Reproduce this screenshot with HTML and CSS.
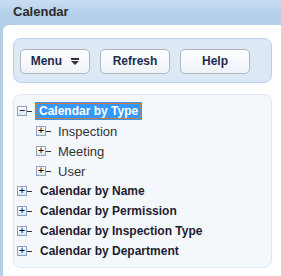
FILE: index.html
```html
<!DOCTYPE html>
<html lang="en">
<head>
  <meta charset="UTF-8">
  <title>Calendar</title>
  <link rel="stylesheet" href="styles.css">
</head>
<body>
  <div class="portlet">
    <div class="portlet-title">Calendar</div>
    <div class="portlet-body">
      <div class="toolbar">
        <button class="btn">Menu <span class="caret"></span></button>
        <button class="btn">Refresh</button>
        <button class="btn">Help</button>
      </div>

      <div class="tree">
        <div class="node open">
          <div class="row top">
            <span class="exp">&minus;</span><span class="stub"></span>
            <span class="label selected">Calendar by Type</span>
          </div>
          <div class="children">
            <div class="row">
              <span class="exp">+</span><span class="stub"></span>
              <span class="label">Inspection</span>
            </div>
            <div class="row">
              <span class="exp">+</span><span class="stub"></span>
              <span class="label">Meeting</span>
            </div>
            <div class="row">
              <span class="exp">+</span><span class="stub"></span>
              <span class="label">User</span>
            </div>
          </div>
        </div>
        <div class="row top">
          <span class="exp">+</span><span class="stub"></span>
          <span class="label">Calendar by Name</span>
        </div>
        <div class="row top">
          <span class="exp">+</span><span class="stub"></span>
          <span class="label">Calendar by Permission</span>
        </div>
        <div class="row top">
          <span class="exp">+</span><span class="stub"></span>
          <span class="label">Calendar by Inspection Type</span>
        </div>
        <div class="row top">
          <span class="exp">+</span><span class="stub"></span>
          <span class="label">Calendar by Department</span>
        </div>
      </div>
    </div>
  </div>
</body>
</html>
```

FILE: styles.css
```css
* {
  box-sizing: border-box;
}

body {
  margin: 0;
  font-family: "Liberation Sans", Arial, sans-serif;
  font-size: 12px;
  color: #222;
  background: #b3cfea;
}

.portlet {
  width: 281px;
  height: 276px;
  display: flex;
  flex-direction: column;
  background: #b3cfea;
}

.portlet-title {
  height: 25px;
  padding: 4px 0 0 13px;
  font-size: 13px;
  font-weight: bold;
  color: #2b2b2b;
  background: linear-gradient(#c9ddf2, #b3cfea 60%);
}

.portlet-body {
  flex: 1;
  margin-left: 3px;
  background: #fff;
  border-top-left-radius: 6px;
  padding: 13px 9px 8px 10px;
  display: flex;
  flex-direction: column;
  gap: 11px;
}

.toolbar {
  height: 45px;
  display: flex;
  align-items: center;
  gap: 10px;
  padding: 1px 6px 0;
  background: #dce8f6;
  border: 1px solid #b9d1ec;
  border-radius: 8px;
}

.btn {
  width: 70px;
  height: 25px;
  font-family: inherit;
  font-size: 12px;
  font-weight: bold;
  color: #1d2d4d;
  background: linear-gradient(#ffffff, #eef3f9);
  border: 1px solid #b4b4b4;
  border-radius: 5px;
  padding: 0;
}

/* bar over a small down arrow */
.caret {
  display: inline-block;
  position: relative;
  width: 8px;
  height: 7px;
  margin-left: 6px;
  vertical-align: 0;
  border-top: 2px solid #333;
}

.caret::after {
  content: "";
  position: absolute;
  left: 0;
  top: 1px;
  border-left: 4px solid transparent;
  border-right: 4px solid transparent;
  border-top: 4px solid #333;
}

.tree {
  flex: 1;
  background: #f4f8fd;
  border: 1px solid #dce7f3;
  border-radius: 8px;
  padding: 6px 0 0 3px;
}

.row {
  height: 20px;
  display: flex;
  align-items: center;
}

.exp {
  width: 10px;
  height: 10px;
  border: 1px solid #8ca3c3;
  background: linear-gradient(#fdfdfe, #dfe6ef);
  font-size: 10px;
  line-height: 8px;
  text-align: center;
  color: #000;
  font-family: "DejaVu Sans Mono", monospace;
}

.stub {
  width: 5px;
  height: 1px;
  background: #333;
  margin-right: 5px;
}

.top .label {
  font-weight: bold;
  color: #1d1d2d;
}

.label {
  padding: 2px 3px;
  color: #333;
}

.label.selected {
  background: #3399ff;
  color: #fff;
  outline: 1px dotted #d9823b;
  outline-offset: -2px;
  padding: 2px 4px;
  margin-left: -2px;
}

.children {
  margin-left: 19px;
  background: linear-gradient(#aaa 50%, transparent 50%);
  background-size: 1px 2px;
  background-repeat: repeat-y;
  background-position: 5px -6px;
}

.children .row {
  background: #f4f8fd;
  background-clip: content-box;
}

.children .label {
  font-size: 13px;
  padding-left: 2px;
}
```
